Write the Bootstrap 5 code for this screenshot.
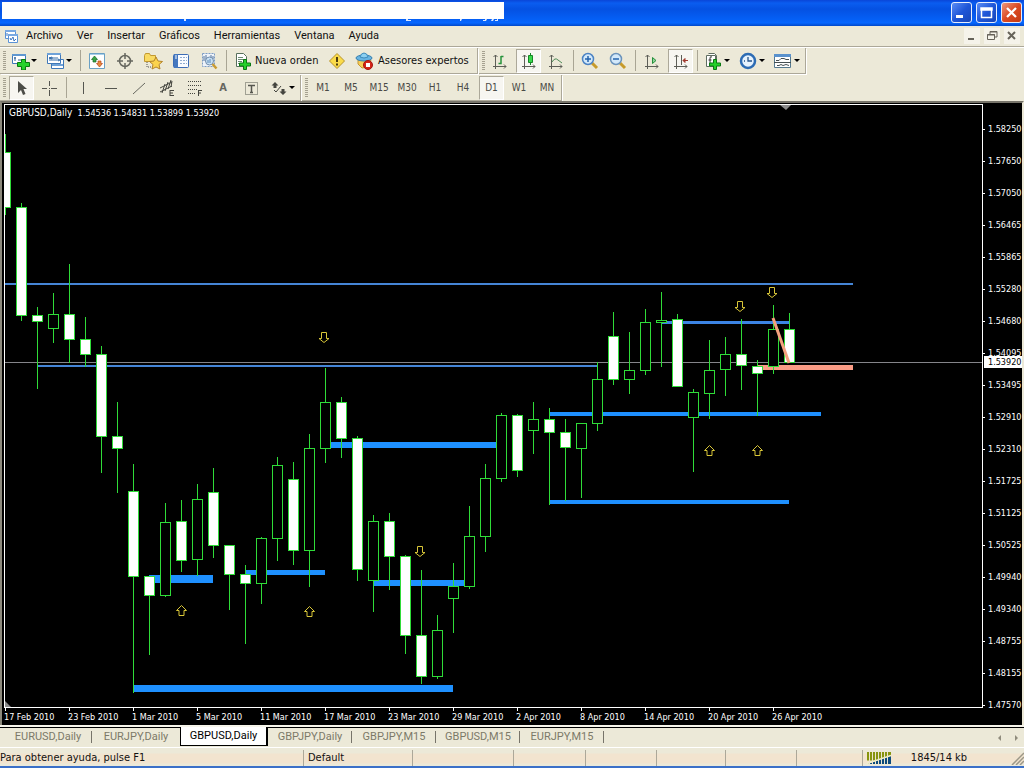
<!DOCTYPE html>
<html lang="es">
<head>
<meta charset="utf-8">
<meta name="viewport" content="width=device-width, initial-scale=1">
<title>GBPUSD,Daily</title>
<link href="https://cdn.jsdelivr.net/npm/bootstrap@5.3.0/dist/css/bootstrap.min.css" rel="stylesheet">
<style>
:root{--face:#ece9d8;--shade:#aca899}
body{font-family:"DejaVu Sans Condensed","DejaVu Sans",sans-serif;font-size:11px;line-height:14px;color:#111;background:var(--face)}
button{font:inherit;color:inherit;border:0;background:none;padding:0}
svg{display:block;flex:none}
.titlebar{height:26px;padding:2px;background:linear-gradient(#0a46d8,#0a5df0 12%,#0551e2 35%,#0560f6 75%,#0667ff 88%,#0148c8)}
.title-text{width:502px;height:17px;background:#fff}
.win-btn{width:21px;height:21px;border:1px solid #e8eefc;border-radius:3px;background:linear-gradient(135deg,#5b8df5,#1f56d8 50%,#1746b8)}
.win-close{background:linear-gradient(135deg,#f0977c,#dc4a22 50%,#c33a14)}
.menubar{height:20px;font-family:Roboto,sans-serif}
.menubar a{color:#111;text-decoration:none;padding:0 7px}
.mdi-btn{width:16px;height:16px;background:#f5f3ea}
.toolbars{border-top:1px solid var(--shade);box-shadow:inset 0 1px #fff}
.tb-row{height:27px;padding-top:1px}
.band{height:26px;border-right:1px solid var(--shade);border-bottom:1px solid var(--shade);margin-right:1px;box-shadow:1px 1px #fff}
.gripper{width:7px;height:20px;background:repeating-linear-gradient(#a5a190 0 1px,transparent 1px 2px) 3px 0/3px 100% no-repeat}
.tb-btn{width:28px;height:26px}
.tb-drop{width:35px;height:26px;padding-left:4px}
.tb-wide{height:26px;padding-left:4px}
.tb-order{width:94px}
.tb-expert{width:126px}
.caret{width:0;border:3px solid transparent;border-top-color:#000;border-bottom:0}
.tb-sep{width:1px;height:21px;background:#a9a594;margin:0 2px 0 3px}
.pressed{width:25px;height:24px;margin:0 1px 0 2px;background:#f7f6f1;border:1px solid #fff;border-top-color:var(--shade);border-left-color:var(--shade)}
.period{font-size:10px;color:#4a4a46}
.letter{font-weight:600;color:#66665f}
.chart{background:#000;color:#fff;border-left:2px solid #8c897c;border-top:2px solid #77746a;border-right:2px solid var(--face);font-size:9px;line-height:12px;padding:1px 0 0 2px}
.plot{border:1px solid #fff;min-height:604px}
.plot svg{width:100%;height:100%}
.ohlc{left:4px;top:2px}
.ohlc span{font-size:10px}
.prices{width:39px;padding-top:19px}
.prices li{height:32px;padding-left:5px}
.prices li:last-child{height:8px}
.prices li::before{content:"";position:absolute;left:0;top:6px;width:2px;height:1px;background:#fff}
.last-price{left:1px;top:252px;width:38px;height:12px;padding-left:4px;background:#fff;color:#000}
.dates{height:17px;white-space:nowrap;padding-top:3px}
.dates li{width:64px}
.dates li::before{content:"";position:absolute;left:1px;top:-3px;width:1px;height:3px;background:#fff}
.tabs{font-family:Roboto,sans-serif;border-top:1px solid #000;box-shadow:0 -2px #f6f4ea;height:20px;margin-top:2px;padding-left:4px}
.tabs a{color:#7c7968;text-decoration:none;text-align:center;height:18px;line-height:17px;width:84px}
.tabs a.tab-wide{width:88px}
.tabs a.split{background:linear-gradient(#77746a,#77746a) 100% 3px/1px 12px no-repeat}
.tabs a.current{background:#fff;color:#000;border:solid #000;border-width:0 2px 1px 1px;margin-top:-1px;height:19px}
.status{height:21px;border-top:1px solid #fff;border-bottom:2px solid #3b70c8;background:linear-gradient(#ece9d8 5px,#f2e4cf 6px,#f2e4cf 15px,#ece9d8 16px)}
.pane{height:16px;padding-left:4px;display:flex;align-items:center}
.pane + .pane{border-left:1px solid var(--shade)}
.pane:first-child{padding-left:0}
</style>
</head>
<body>
<div class="d-flex flex-column min-vh-100">
<header>
  <div class="titlebar d-flex justify-content-between">
    <div>
      <div class="title-text"></div>
      <svg width="502" height="4" fill="#dce8ff"><path d="M182 0h2v2h-2zM404 0h2v1h3v1h-5zM458 0h2l-1 2h-1zM483 0h2l-1 2h-3v-1h2zM490 0h2l-1 2h-2zM495 0h1v2h-3v-1h2z"/></svg>
    </div>
    <div class="d-flex gap-1">
      <button class="win-btn" aria-label="Minimizar"><svg width="19" height="19"><path d="M4 12h7v3H4z" fill="#fff"/></svg></button>
      <button class="win-btn" aria-label="Maximizar"><svg width="19" height="19"><path d="M4.500 5.500h10v9h-10zM4 5h11v2H4z" fill="none" stroke="#fff" stroke-width="1.500"/></svg></button>
      <button class="win-btn win-close" aria-label="Cerrar"><svg width="19" height="19"><path d="M5 5l9 9M14 5l-9 9" stroke="#fff" stroke-width="2.300"/></svg></button>
    </div>
  </div>
  <nav class="menubar d-flex align-items-center">
    <svg class="ms-1" width="15" height="15"><g stroke="#5b93d6" fill="#fff"><path d="M1.500 1.500h10v8h-10z"/><path d="M4.500 5.500h9v8h-9z"/></g><path d="M1 1h11v2H1zM4 5h10v2H4z" fill="#79a9e2"/><path d="M3 7V4M6 9l1 2 2-3 1 4 2-2" stroke="#3d77c2" fill="none"/></svg>
    <a href="#">Archivo</a><a href="#">Ver</a><a href="#">Insertar</a><a href="#">Gráficos</a><a href="#">Herramientas</a><a href="#">Ventana</a><a href="#">Ayuda</a>
    <div class="ms-auto d-flex gap-1 pe-1">
      <button class="mdi-btn" aria-label="Minimizar ventana"><svg width="16" height="16"><path d="M4 10h6v2H4z" fill="#66635a"/></svg></button>
      <button class="mdi-btn" aria-label="Restaurar ventana"><svg width="16" height="16"><path d="M6 6V3.500h7V9h-2M3.500 6.500h7v5h-7zM3 7h8M6 4h7" fill="none" stroke="#66635a"/></svg></button>
      <button class="mdi-btn" aria-label="Cerrar ventana"><svg width="16" height="16"><path d="M4 4l7 7M11 4l-7 7" stroke="#66635a" stroke-width="2"/></svg></button>
    </div>
  </nav>
  <div class="toolbars">
    <div class="tb-row d-flex">
      <div class="band d-flex align-items-center">
        <i class="gripper"></i>
        <button class="tb-drop d-flex align-items-center" aria-label="Nuevo gráfico"><svg width="20" height="18"><path d="M1.500 2.500h13v9h-13z" fill="#fff" stroke="#3f78b8"/><path d="M1 2h14v2H1z" fill="#5f97d0"/><path d="M4 9V5M3 6h2M7 8h4" stroke="#2c5f92"/><path d="M10.500 7.500h4v3h4v4h-4v3.500h-4v-3.500h-4v-4h4z" fill="#27d32b" stroke="#0a7a12"/></svg><i class="caret"></i></button>
        <button class="tb-drop d-flex align-items-center" aria-label="Perfiles"><svg width="20" height="18"><g fill="#fff" stroke="#3f78b8"><path d="M5.500 7.500h12v9h-12z"/><path d="M1.500 1.500h13v10h-13z"/></g><path d="M1 1h14v2H1zM6 12h11v2H6z" fill="#6ea2d8"/><path d="M3 6l3-1v2zM3 6h9M3 8h10M12 7l2 1-2 1" stroke="#376ea9" fill="none"/></svg><i class="caret"></i></button>
        <i class="tb-sep"></i>
        <button class="tb-btn d-flex align-items-center justify-content-center" aria-label="Observación de mercado"><svg width="18" height="18"><path d="M1.500 1.500h15v15h-15z" fill="#fff" stroke="#6aa0c4"/><path d="M2 2h14v1H2z" fill="#a9d0ea"/><path d="M6.500 4l3 3.500H8V10H5V7.500H3.500z" fill="#39a544" stroke="#176a25" stroke-width=".7"/><path d="M11.500 15l-3-3.500H10V9h3v2.500h1.500z" fill="#e68c3c" stroke="#b7421c" stroke-width=".7"/></svg></button>
        <button class="tb-btn d-flex align-items-center justify-content-center" aria-label="Ventana de datos"><svg width="18" height="18"><circle cx="9" cy="9" r="5.500" fill="none" stroke="#66675f" stroke-width="1.500"/><path d="M9 1v6M9 11v6M1 9h6M11 9h6" stroke="#66675f" stroke-width="1.500"/></svg></button>
        <button class="tb-btn d-flex align-items-center justify-content-center" aria-label="Navegador"><svg width="20" height="18"><path d="M1.500 3.500l1-2h4l1 2h5v6h-11z" fill="#f9da62" stroke="#c29930"/><path d="M4 10v5h5" stroke="#555" stroke-dasharray="1 1" fill="none"/><path d="M13 5l2 4 4.500.5-3.500 3 1 4.500-4-2-4 2 1-4.500-3.500-3L11 9z" fill="#fbd34d" stroke="#b3832a"/></svg></button>
        <button class="tb-btn d-flex align-items-center justify-content-center" aria-label="Terminal"><svg width="18" height="18"><rect x="1.500" y="2.500" width="15" height="13" rx="1" fill="#f8fbff" stroke="#3c6cb5"/><path d="M2 2h4v14H2z" fill="#4578bf"/><path d="M3 4h2M3 6h2" stroke="#fff"/><path d="M8 5.500h7M8 8.500h7M8 11.500h7" stroke="#8fabd0" stroke-dasharray="2 1"/></svg></button>
        <button class="tb-btn d-flex align-items-center justify-content-center" aria-label="Probador"><svg width="18" height="18"><path d="M2.500 1.500h12v13h-12z" fill="#eef3fa" stroke="#7c9cc4" stroke-dasharray="2 1"/><path d="M4 4v5M6 3v5M11 3v4M13 4v3" stroke="#50729c"/><circle cx="9.500" cy="9" r="4" fill="#c9e1f5" stroke="#708cab"/><path d="M8 11V8M10 11V7" stroke="#5a88b5"/><path d="M12.500 12l4 4.500" stroke="#c99b32" stroke-width="2.500"/></svg></button>
        <i class="tb-sep"></i>
        <button class="tb-wide tb-order d-flex align-items-center gap-1"><svg width="18" height="18"><path d="M3.500 1.500h7l3 3v10h-10z" fill="#fff" stroke="#58705c"/><path d="M5 5.500h5M5 7.500h6M5 9.500h4M5 11.500h3" stroke="#6c8a72"/><path d="M10.500 7.500h3v3.500h4v3h-4V17.500h-3V14h-4v-3h4z" fill="#25cf2a" stroke="#0a7a12"/></svg>Nueva orden</button>
        <button class="tb-btn d-flex align-items-center justify-content-center" aria-label="MetaEditor"><svg width="18" height="18"><path d="M9 1.500L16.500 9 9 16.500 1.500 9z" fill="#fadb4a" stroke="#b7932b" stroke-linejoin="round"/><path d="M9 5v5M9 11.500v2" stroke="#4c3c10" stroke-width="2"/></svg></button>
        <button class="tb-wide tb-expert d-flex align-items-center gap-1"><svg width="19" height="18"><path d="M3 8l8-2 5 2-3 7-6 1-4-4z" fill="#f7cd57" stroke="#c59834"/><ellipse cx="9" cy="6" rx="8" ry="3" fill="#68b4e2" stroke="#357fae"/><path d="M5 5q1-4 4-4t4 4q-4 2-8 0z" fill="#8dd0f1" stroke="#3d8aba"/><circle cx="13" cy="13" r="4.500" fill="#d52418" stroke="#a3180f"/><path d="M11 11h4v4h-4z" fill="#fff"/></svg>Asesores expertos</button>
      </div>
      <div class="band d-flex align-items-center">
        <i class="gripper"></i>
        <button class="tb-btn d-flex align-items-center justify-content-center" aria-label="Barras"><svg width="16" height="16" fill="none"><path d="M3.500 16V2M1.500 4l2-2 2 2M1 13.500h13M12 11.500l2 2-2 2" stroke="#5d5e57"/><path d="M6.500 10.500H9V3M11.500 3.500H9" stroke="#26923b" stroke-width="1.500"/></svg></button>
        <button class="pressed d-flex align-items-center justify-content-center" aria-label="Velas" aria-pressed="true"><svg width="16" height="16" fill="none"><path d="M3.500 16V2M1.500 4l2-2 2 2M1 13.500h13M12 11.500l2 2-2 2" stroke="#5d5e57"/><path d="M9.500 0v12" stroke="#168527"/><path d="M7.500 2.500h4v7h-4z" fill="#38d84a" stroke="#168527"/></svg></button>
        <button class="tb-btn d-flex align-items-center justify-content-center" aria-label="Línea"><svg width="16" height="16" fill="none"><path d="M3.500 16V2M1.500 4l2-2 2 2M1 13.500h13M12 11.500l2 2-2 2" stroke="#5d5e57"/><path d="M4 9q3-5 6-2l4 3" stroke="#4d8a56"/></svg></button>
        <i class="tb-sep"></i>
        <button class="tb-btn d-flex align-items-center justify-content-center" aria-label="Acercar"><svg width="18" height="18"><path d="M11 11l5 5" stroke="#c79b2b" stroke-width="3"/><circle cx="7" cy="7" r="5.500" fill="#d3e9fb" stroke="#4c83c3" stroke-width="1.500"/><path d="M4 7h6M7 4v6" stroke="#2563ad" stroke-width="1.500"/></svg></button>
        <button class="tb-btn d-flex align-items-center justify-content-center" aria-label="Alejar"><svg width="18" height="18"><path d="M11 11l5 5" stroke="#c79b2b" stroke-width="3"/><circle cx="7" cy="7" r="5.500" fill="#d3e9fb" stroke="#6b93bb" stroke-width="1.500"/><path d="M4 7h6" stroke="#2563ad" stroke-width="1.500"/></svg></button>
        <i class="tb-sep"></i>
        <button class="tb-btn d-flex align-items-center justify-content-center" aria-label="Desplazamiento automático"><svg width="16" height="16" fill="none"><path d="M3.500 16V2M1.500 4l2-2 2 2M1 13.500h13M12 11.500l2 2-2 2" stroke="#5d5e57"/><path d="M8.500 4.500v6l3.500-3z" stroke="#23903a" fill="#8ed29a"/></svg></button>
        <button class="pressed d-flex align-items-center justify-content-center" aria-label="Desplazar gráfico" aria-pressed="true"><svg width="16" height="16" fill="none"><path d="M3.500 16V2M1.500 4l2-2 2 2M1 13.500h13M12 11.500l2 2-2 2M8.500 2v10" stroke="#5d5e57"/><path d="M10 7.500h5M12 5.500v4l-2-2z" stroke="#a1392e" fill="#a1392e"/></svg></button>
        <i class="tb-sep"></i>
        <button class="tb-drop d-flex align-items-center" aria-label="Indicadores"><svg width="20" height="18"><path d="M2.500 3.500h9v11h-9zM4.500 1.500h6l2 2v9" fill="#fff" stroke="#5f6d61"/><path d="M8 5q-2-1-2 1v6M4.500 8h3" stroke="#333" fill="none"/><path d="M9.500 7.500h3v3.500h4v3h-4V17.500h-3V14h-4v-3h4z" fill="#25cf2a" stroke="#0a7a12"/></svg><i class="caret"></i></button>
        <button class="tb-drop d-flex align-items-center" aria-label="Períodos"><svg width="20" height="18"><circle cx="9" cy="9" r="7" fill="#e6f2fd" stroke="#2d6cb4" stroke-width="2.500"/><path d="M9 5v4h4M5 9h1" stroke="#27558b" fill="none" stroke-width="1.300"/></svg><i class="caret"></i></button>
        <button class="tb-drop d-flex align-items-center" aria-label="Plantillas"><svg width="20" height="18"><path d="M.5 2.500h16v13H.5z" fill="#fff" stroke="#55798f"/><path d="M0 2h17v3H0z" fill="#5a92cd"/><path d="M0 10.500h17M2 8.500h3l2-2h3l2 1h3M3 13.500h2l2-1 2 1 3-1 3 1" stroke="#454f52" fill="none"/></svg><i class="caret"></i></button>
      </div>
    </div>
    <div class="tb-row d-flex">
      <div class="band d-flex align-items-center">
        <i class="gripper"></i>
        <button class="pressed d-flex align-items-center justify-content-center" aria-label="Cursor" aria-pressed="true"><svg width="12" height="16"><path d="M2 1v12l3-3 2 5 2.500-1L7.500 9H11z" fill="#4c4d48"/></svg></button>
        <button class="tb-btn d-flex align-items-center justify-content-center" aria-label="Cruz"><svg width="16" height="16"><path d="M8.500 1v5M8.500 10v6M1 8.500h5M10 8.500h6M8 8.500h1" stroke="#555650"/></svg></button>
        <i class="tb-sep"></i>
        <button class="tb-btn d-flex align-items-center justify-content-center" aria-label="Línea vertical"><svg width="16" height="16"><path d="M8.500 2v12" stroke="#555650"/></svg></button>
        <button class="tb-btn d-flex align-items-center justify-content-center" aria-label="Línea horizontal"><svg width="16" height="16"><path d="M2 8.500h12" stroke="#555650"/></svg></button>
        <button class="tb-btn d-flex align-items-center justify-content-center" aria-label="Línea de tendencia"><svg width="16" height="16"><path d="M2 14L14 3" stroke="#66675f"/></svg></button>
        <button class="tb-btn d-flex align-items-center justify-content-center" aria-label="Canal equidistante"><svg width="18" height="18" stroke="#44453f" fill="none"><path d="M2 9l12-6M2 13l12-6M4 14l3-9M7 12l3-9M10 10l3-9M13 8l1-6M12 11.500h4M12 14h3M12 16.500h4M12 11v6"/></svg></button>
        <button class="tb-btn d-flex align-items-center justify-content-center" aria-label="Retroceso de Fibonacci"><svg width="18" height="18" stroke="#44453f" fill="none"><path d="M2 2.500h14M2 6.500h14M2 10.500h9M2 14.500h8" stroke-dasharray="1 1"/><path d="M12.500 17v-6M12 11.500h4M12 14h3"/></svg></button>
        <button class="tb-btn letter" aria-label="Texto">A</button>
        <button class="tb-btn d-flex align-items-center justify-content-center" aria-label="Etiqueta de texto"><svg width="16" height="16" fill="none"><path d="M2.500 2.500h12v12h-12z" stroke="#55564f" stroke-dasharray="1 1"/><path d="M5 5.500h7M8.500 5v8M7 12.500h3" stroke="#55564f" stroke-width="1.500"/></svg></button>
        <button class="tb-drop d-flex align-items-center" aria-label="Flechas"><svg width="20" height="18" fill="#44453f"><path d="M6 3l3.500 3.500H7.500V9h-3V6.500h-2zM14 16l-3.500-3.500h2V10h3v2.500h2z"/><path d="M5 11l2 2 5-6" stroke="#44453f" fill="none"/></svg><i class="caret"></i></button>
      </div>
      <div class="band d-flex align-items-center period">
        <i class="gripper"></i>
        <button class="tb-btn">M1</button><button class="tb-btn">M5</button><button class="tb-btn">M15</button><button class="tb-btn">M30</button><button class="tb-btn">H1</button><button class="tb-btn">H4</button><button class="pressed" aria-pressed="true">D1</button><button class="tb-btn">W1</button><button class="tb-btn">MN</button>
      </div>
    </div>
  </div>
</header>

<main class="chart flex-grow-1 d-flex flex-column">
  <div class="d-flex flex-grow-1">
    <div class="plot flex-grow-1 position-relative">
      <svg class="position-absolute top-0 start-0" role="img" aria-label="Velas GBPUSD diario">
        <g transform="translate(-5,-105)">
          <g fill="#1e90ff">
            <path d="M5 283h848v2H5zM37 365h560v2H37z" fill="#4585d6"/>
            <path d="M149 575h64v8h-64zM245 570h80v5h-80zM133 685h320v7H133zM325 442h176v6H325zM373 580h96v6h-96zM549 412h272v4H549zM549 500h240v4H549z"/>
            <path d="M661 321h128v3H661z" fill="#3c84e4"/>
          </g>
          <path d="M757 365h96v5h-96z" fill="#fa9c86"/>
          <path d="M5 362h4000v1H5z" fill="#85858a"/>
          <g id="candles" stroke="#2fdc38"></g>
          <path d="M773 318l16 45" stroke="#f4a07e" stroke-width="3"/>
          <g id="signals" fill="none" stroke="#d8c638"></g>
          <path d="M780 105h11l-5 5z" fill="#8b8b8b"/>
          <path d="M5 701l6 6H5z" fill="#8b8b8b"/>
        </g>
      </svg>
      <div class="ohlc position-absolute"><span>GBPUSD,Daily</span>&nbsp; 1.54536 1.54831 1.53899 1.53920</div>
    </div>
    <div class="position-relative">
      <ol class="prices list-unstyled mb-0">
        <li class="position-relative">1.58250</li><li class="position-relative">1.57650</li><li class="position-relative">1.57050</li><li class="position-relative">1.56465</li><li class="position-relative">1.55865</li><li class="position-relative">1.55280</li><li class="position-relative">1.54680</li><li class="position-relative">1.54095</li><li class="position-relative">1.53495</li><li class="position-relative">1.52910</li><li class="position-relative">1.52310</li><li class="position-relative">1.51725</li><li class="position-relative">1.51125</li><li class="position-relative">1.50525</li><li class="position-relative">1.49940</li><li class="position-relative">1.49340</li><li class="position-relative">1.48755</li><li class="position-relative">1.48155</li><li class="position-relative">1.47570</li>
      </ol>
      <div class="last-price position-absolute">1.53920</div>
    </div>
  </div>
  <ol class="dates list-unstyled d-flex mb-0">
    <li class="position-relative">17 Feb 2010</li><li class="position-relative">23 Feb 2010</li><li class="position-relative">1 Mar 2010</li><li class="position-relative">5 Mar 2010</li><li class="position-relative">11 Mar 2010</li><li class="position-relative">17 Mar 2010</li><li class="position-relative">23 Mar 2010</li><li class="position-relative">29 Mar 2010</li><li class="position-relative">2 Apr 2010</li><li class="position-relative">8 Apr 2010</li><li class="position-relative">14 Apr 2010</li><li class="position-relative">20 Apr 2010</li><li class="position-relative">26 Apr 2010</li>
  </ol>
</main>

<nav class="tabs d-flex">
  <a class="tab-wide split" href="#">EURUSD,Daily</a><a class="tab-wide" href="#">EURJPY,Daily</a><a class="tab-wide current" href="#" aria-current="page">GBPUSD,Daily</a><a class="split" href="#">GBPJPY,Daily</a><a class="split" href="#">GBPJPY,M15</a><a class="split" href="#">GBPUSD,M15</a><a class="split" href="#">EURJPY,M15</a>
  <div class="ms-auto d-flex align-items-center gap-2 pe-1">
    <button aria-label="Anterior"><svg width="8" height="8"><path d="M5 1v6L2 4z" fill="#8f8c7d"/></svg></button>
    <button aria-label="Siguiente"><svg width="8" height="8"><path d="M3 1v6l3-3z" fill="#8f8c7d"/></svg></button>
  </div>
</nav>
<footer class="status d-flex align-items-end">
  <div class="pane flex-grow-1">Para obtener ayuda, pulse F1</div>
  <div class="pane" style="width:109px">Default</div><div class="pane" style="width:101px"></div><div class="pane" style="width:72px"></div><div class="pane" style="width:71px"></div><div class="pane" style="width:69px"></div><div class="pane" style="width:71px"></div><div class="pane" style="width:66px"></div>
  <div class="pane justify-content-between" style="width:162px">
    <svg width="24" height="12"><path d="M0 2h24M0 6h24" stroke="#87940e" stroke-width="5"/><path d="M0 12l24-8v8z" fill="#0c4a7c"/><path d="M0 11.500l24-8" stroke="#f2f2c8" stroke-width="1.500"/><path d="M2.500 0v12M5.500 0v12M8.500 0v12M11.500 0v12M14.500 0v12M17.500 0v12M20.500 0v12" stroke="#ece4cf"/></svg>
    <span>1845/14 kb</span>
    <svg class="ms-4" width="13" height="14"><path d="M1 14L13 2M5 14l8-8M9 14l4-4" stroke="#9c9888" stroke-width="1.500"/></svg>
  </div>
</footer>
</div>
<script src="https://cdn.jsdelivr.net/npm/bootstrap@5.3.0/dist/js/bootstrap.bundle.min.js"></script>
<script>
// One row per trading day: high, body top, body bottom, low, falling (1) or rising (0)
const days = [
[134,152,207,214,1],[203,207,315,320,1],[307,315,321,388,1],[293,314,328,342,0],[264,314,339,362,1],
[317,339,354,366,1],[346,354,436,472,1],[402,436,448,492,1],[464,491,576,692,1],[576,576,595,654,1],
[503,522,595,596,0],[500,521,560,571,1],[484,499,559,575,0],[468,492,545,557,1],[545,545,574,609,1],
[565,574,583,643,1],[537,538,583,603,0],[457,465,538,560,0],[462,479,550,564,1],[434,448,550,586,0],
[368,402,448,462,0],[397,402,438,457,1],[436,438,569,580,1],[515,521,580,611,0],[513,521,556,589,1],
[555,556,635,653,1],[570,635,676,683,1],[615,630,676,678,0],[563,586,598,632,0],[506,536,586,588,0],
[464,478,536,551,0],[413,415,478,481,0],[414,415,470,476,1],[402,419,430,453,0],[408,419,432,504,1],
[419,432,447,500,1],[423,423,448,497,0],[362,379,423,430,0],[312,336,379,384,1],[332,370,379,393,0],
[309,322,370,374,0],[292,320,322,366,0],[314,319,386,386,1],[389,392,417,471,0],[340,370,393,418,0],
[337,354,369,395,0],[319,354,365,389,1],[360,366,373,415,1],[305,329,366,373,0],[313,329,362,362,1]];
document.getElementById('candles').innerHTML = days.map(([h,t,b,l,down],i) => {
  const x = 5 + 16 * i;
  return `<path d="M${x+.5} ${h}V${l+1}"/><rect x="${x-4.5}" y="${t+.5}" width="10" height="${b-t}" fill="${down?'#fff':'#000'}"/>`;
}).join('');
const up = [[181,605],[309,606],[709,445],[757,445]];
const dn = [[324,332],[420,546],[740,301],[772,287]];
document.getElementById('signals').innerHTML =
  up.map(([x,y]) => `<path d="M${x+.5} ${y+.5}l5 5h-2.500v5h-5v-5h-2.500z"/>`).join('') +
  dn.map(([x,y]) => `<path d="M${x} ${y+10.5}l5-4h-2.500v-6h-5v6h-2.500z"/>`).join('');
</script>
</body>
</html>
